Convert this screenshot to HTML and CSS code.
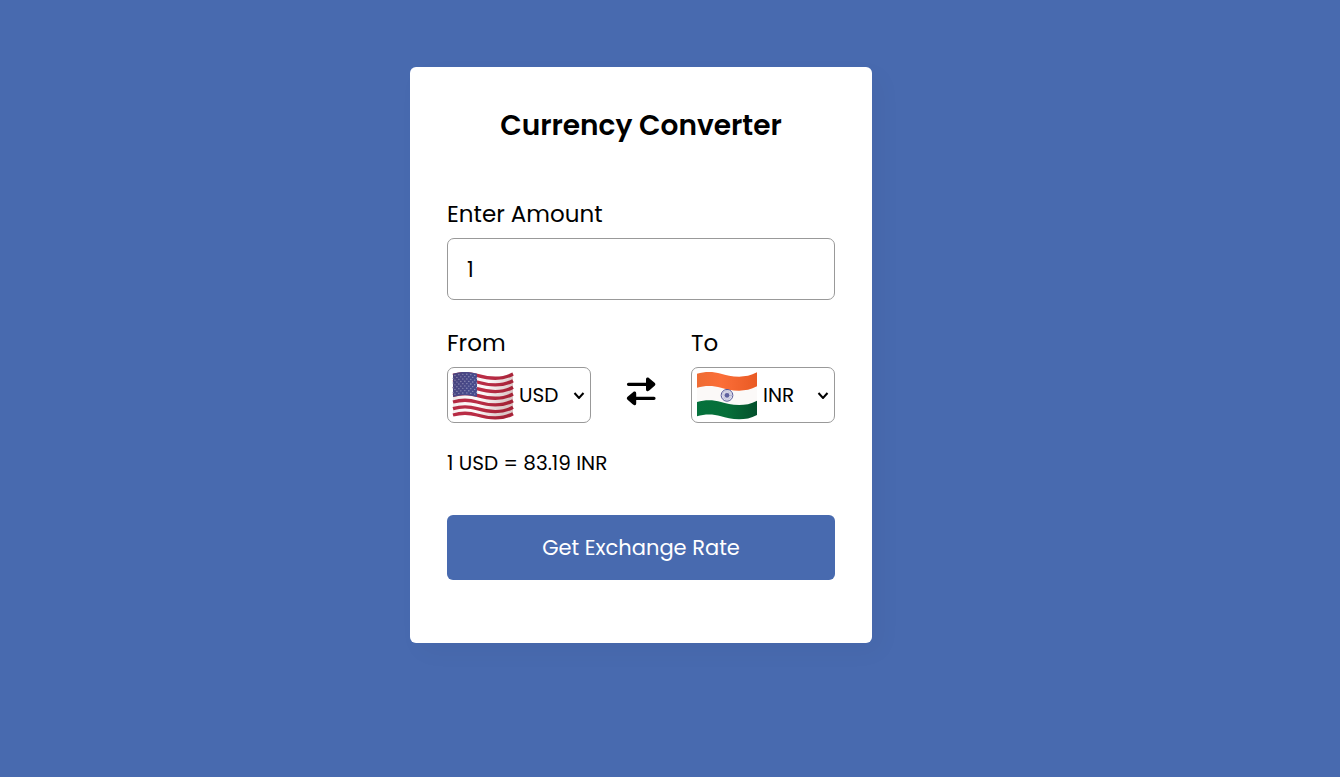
FILE: index.html
```html
<!DOCTYPE html>
<html lang="en">
<head>
<meta charset="utf-8">
<meta name="viewport" content="width=device-width, initial-scale=1">
<title>Currency Converter</title>
<link rel="stylesheet" href="styles.css">
</head>
<body>
<main class="card">
  <h1 class="title">Currency Converter</h1>
  <form class="form">
    <div class="field">
      <label class="label" for="amount">Enter Amount</label>
      <input class="amount" id="amount" type="text" inputmode="decimal" value="1">
    </div>
    <div class="pair">
      <div class="field">
        <label class="label" for="from">From</label>
        <div class="picker">
          <svg class="flag" viewBox="0 0 183 138" aria-hidden="true">
            <defs>
              <path id="wave" d="M0 0C24 -7 48 -7 72 0S140 18 180 -4"/>
              <path id="stars" d="M0 0C24 -7 48 -7 72 0"/>
              <linearGradient id="shade" x2="1" y2=".3"><stop stop-color="#500" stop-opacity=".12"/><stop offset=".35" stop-color="#500" stop-opacity="0"/><stop offset=".6" stop-color="#500" stop-opacity="0"/><stop offset="1" stop-color="#500" stop-opacity=".2"/></linearGradient>
            </defs>
            <path d="M0 5C24 -2 48 -2 72 5S140 23 180 1V129C140 151 96 140 72 133S24 126 0 133Z" fill="#fbf7f7"/>
            <g fill="none" stroke="#b92c45" stroke-width="10">
              <use href="#wave" y="10"/><use href="#wave" y="30"/><use href="#wave" y="50"/><use href="#wave" y="70"/><use href="#wave" y="90"/><use href="#wave" y="110"/><use href="#wave" y="129"/>
            </g>
            <path d="M0 5C24 -2 48 -2 72 5V75C48 68 24 68 0 75Z" fill="#484b8c"/>
            <g fill="none" stroke="#9a9cc2" stroke-width="4" stroke-linecap="round" stroke-dasharray="0 12">
              <g stroke-dashoffset="-6"><use href="#stars" y="12"/><use href="#stars" y="26"/><use href="#stars" y="40"/><use href="#stars" y="54"/><use href="#stars" y="68"/></g>
              <g stroke-dashoffset="-12"><use href="#stars" y="19"/><use href="#stars" y="33"/><use href="#stars" y="47"/><use href="#stars" y="61"/></g>
            </g>
            <path d="M0 5C24 -2 48 -2 72 5S140 23 180 1V129C140 151 96 140 72 133S24 126 0 133Z" fill="url(#shade)"/>
          </svg>
          <span class="choice">
            <select class="select" id="from"><option>USD</option><option>INR</option></select>
            <svg class="chevron" viewBox="0 0 12 8" aria-hidden="true"><path d="M1.500 2 6 7 10.500 2"/></svg>
          </span>
        </div>
      </div>
      <button class="swap" type="button" aria-label="Swap currencies">
        <svg class="swap-icon" viewBox="0 0 30 28" aria-hidden="true">
          <path d="M2.500 7.300H22M8 21.300H28" fill="none" stroke="#000" stroke-width="3.200" stroke-linecap="round"/>
          <path d="M20 2.200V12.400Q20 14.800 22.300 14L23.500 13.200L28.900 8.600Q30 7.300 28.900 6L23.500 1.400L22.300 .6Q20 -.2 20 2.200ZM10.200 16.200V26.400Q10.200 28.800 7.900 28L6.700 27.200L1.300 22.600Q.2 21.300 1.300 20L6.700 15.400L7.900 14.600Q10.200 13.800 10.200 16.200Z"/>
        </svg>
      </button>
      <div class="field">
        <label class="label" for="to">To</label>
        <div class="picker">
          <svg class="flag" viewBox="0 0 183 138" aria-hidden="true">
            <defs>
              <linearGradient id="saffron" x2="1"><stop stop-color="#ee6c34"/><stop offset=".4" stop-color="#fb6e38"/><stop offset="1" stop-color="#e95a24"/></linearGradient>
              <linearGradient id="green" x2="1"><stop stop-color="#04713c"/><stop offset=".5" stop-color="#076f39"/><stop offset="1" stop-color="#03502c"/></linearGradient>
            </defs>
            <path d="M0 5C24 -2 48 -2 72 5S140 23 180 1V129C140 151 96 140 72 133S24 126 0 133Z" fill="#fbf9f8"/>
            <path d="M0 5C24 -2 48 -2 72 5S140 23 180 1V43C140 65 96 54 72 47S24 40 0 47Z" fill="url(#saffron)"/>
            <path d="M0 90C24 83 48 83 72 90S140 108 180 86V129C140 151 96 140 72 133S24 126 0 133Z" fill="url(#green)"/>
            <g fill="none" stroke="#4b4d92">
              <circle cx="90" cy="70" r="17.500" stroke-width="3"/>
              <circle cx="90" cy="70" r="10" stroke="#b4b5d3" stroke-width="12" stroke-dasharray="1.600 1"/>
            </g>
            <circle cx="90" cy="70" r="7" fill="#5f619e"/>
          </svg>
          <span class="choice">
            <select class="select" id="to"><option>INR</option><option>USD</option></select>
            <svg class="chevron" viewBox="0 0 12 8" aria-hidden="true"><path d="M1.500 2 6 7 10.500 2"/></svg>
          </span>
        </div>
      </div>
    </div>
    <output class="rate" for="amount from to">1 USD = 83.19 INR</output>
    <button class="submit" type="button">Get Exchange Rate</button>
  </form>
</main>
</body>
</html>
```
FILE: styles.css
```css
* {
  box-sizing: border-box;
}

body {
  margin: 0;
  min-height: 100vh;
  padding: 67px 58px 67px 0;
  background: #486aaf;
  color: #000;
  font-family: Poppins, Inter, "Open Sans", sans-serif;
}

button,
input,
select {
  color: inherit;
  font-family: inherit;
}

.card {
  width: 100%;
  max-width: 462px;
  margin: 0 auto;
  padding: 38px 37px 63px;
  border-radius: 6px;
  background: #fff;
  box-shadow: 9px 9px 26px rgba(0, 0, 0, 0.03);
}

.title {
  margin: 0 0 50px;
  font-size: 28px;
  font-weight: 600;
  line-height: 42px;
  text-align: center;
}

.field {
  display: flex;
  flex-direction: column;
  gap: 7px;
}

.label {
  font-size: 23px;
  line-height: 34px;
}

.amount {
  width: 100%;
  height: 62px;
  padding: 0 19px;
  border: 1px solid #999;
  border-radius: 7px;
  background: #fff;
  font-size: 21px;
}

.pair {
  display: grid;
  grid-template-columns: 144px 1fr 144px;
  margin-top: 26px;
}

.picker {
  display: flex;
  align-items: center;
  gap: 5px;
  height: 56px;
  padding: 0 5px;
  border: 1px solid #999;
  border-radius: 7px;
}

.flag {
  flex: none;
  width: 61px;
  height: 46px;
  overflow: visible;
}

.choice {
  display: grid;
  flex: 1;
  align-items: center;
}

.select {
  grid-area: 1 / 1;
  width: 100%;
  height: 40px;
  padding: 0;
  border: 0;
  background: none;
  appearance: none;
  font-size: 20px;
}

.chevron {
  grid-area: 1 / 1;
  justify-self: end;
  width: 12px;
  height: 8px;
  fill: none;
  stroke: #000;
  stroke-width: 2;
  pointer-events: none;
}

.swap {
  display: grid;
  place-items: center;
  align-self: end;
  height: 64px;
  padding: 0;
  border: 0;
  background: none;
}

.swap-icon {
  width: 30px;
  height: 28px;
  overflow: visible;
}

.rate {
  display: block;
  margin: 25px 0 37px;
  font-size: 20px;
  line-height: 30px;
}

.submit {
  width: 100%;
  height: 65px;
  border: 0;
  border-radius: 6px;
  background: #486aaf;
  color: #fff;
  font-size: 21px;
}
```
